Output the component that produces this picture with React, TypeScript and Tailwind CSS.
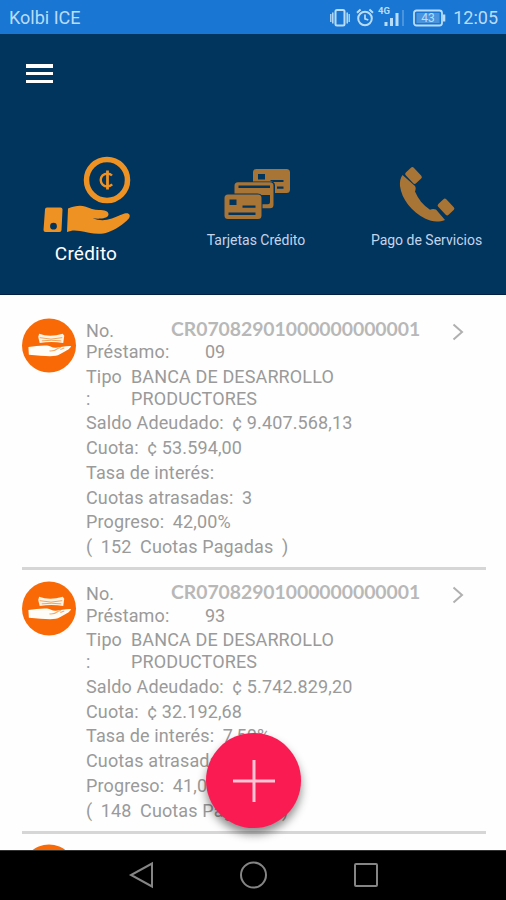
import type { ReactNode } from 'react';

type Loan = {
  suffix: string;
  balance: string;
  fee: string;
  rate: string;
  late: string;
  progress: string;
  paid: string;
};

const ACCOUNT = 'CR07082901000000000001';

const LOANS: Loan[] = [
  {
    suffix: '09',
    balance: '9.407.568,13',
    fee: '53.594,00',
    rate: '',
    late: '3',
    progress: '42,00%',
    paid: '152',
  },
  {
    suffix: '93',
    balance: '5.742.829,20',
    fee: '32.192,68',
    rate: '7,50%',
    late: '3',
    progress: '41,00%',
    paid: '148',
  },
];

function StatusBar() {
  return (
    <div className="flex h-[34px] shrink-0 items-center justify-between bg-[#1976d2] pr-[8px] pl-[9px] text-[#b9dcf8]">
      <span className="text-[18px]">Kolbi ICE</span>
      <div className="flex items-center pt-px">
        {/* Vibrate */}
        <svg width="20" height="20" viewBox="0 0 20 20" fill="none" stroke="currentColor" className="mr-[6px]">
          <rect x="5.5" y="2" width="9" height="15.5" rx="1.5" strokeWidth="2" />
          <path d="M2.8 4.5v11M17.2 4.5v11" strokeWidth="1.5" />
          <path d="M.8 6v8M19.2 6v8" strokeWidth="1.3" />
        </svg>
        {/* Alarm */}
        <svg width="18" height="20" viewBox="0 0 18 20" fill="none" stroke="currentColor" className="mr-[4px]">
          <circle cx="9" cy="10.5" r="6.8" strokeWidth="2" />
          <path d="M9 6.5v4.3l3.3 1.2" strokeWidth="1.7" />
          <path d="M1 4.7 4.6 1.5M17 4.7 13.4 1.5" strokeWidth="2" />
        </svg>
        {/* Signal */}
        <svg width="27" height="24" viewBox="0 0 27 24" fill="currentColor" className="mr-[8px]">
          <text x="0" y="8" fontSize="9.5" fontWeight="700">4G</text>
          <rect x="6.5" y="16" width="3" height="4" />
          <rect x="12" y="12" width="3" height="8" />
          <rect x="17.5" y="7" width="3" height="13" />
          <rect x="24" y="4" width="2" height="16" opacity=".3" />
        </svg>
        {/* Battery */}
        <svg width="33" height="18" viewBox="0 0 33 18" className="mr-[7px]">
          <rect x="1" y="1.5" width="28" height="15" rx="2.5" fill="none" stroke="currentColor" strokeWidth="1.8" />
          <rect x="30" y="5.5" width="2.3" height="7" fill="currentColor" />
          <rect x="3.5" y="4" width="23" height="10" fill="currentColor" opacity=".3" />
          <text x="15" y="13.3" fontSize="12" textAnchor="middle" fill="currentColor">43</text>
        </svg>
        <span className="text-[18px]">12:05</span>
      </div>
    </div>
  );
}

function CreditIcon() {
  return (
    <svg width="90" height="80" viewBox="0 0 90 80" fill="#ee9224" className="ml-[2px]">
      <circle cx="65" cy="24" r="20.5" fill="none" stroke="#ee9224" strokeWidth="5.5" />
      <path
        d="M70 19.5c-1.3-1.3-2.8-1.9-4.5-1.9-4 0-6.8 2.800-6.800 6.400s2.800 6.400 6.800 6.400c1.8 0 3.300-.7 4.700-2"
        fill="none"
        stroke="#ee9224"
        strokeWidth="2.4"
      />
      <path d="M65.500 14.500v19" fill="none" stroke="#ee9224" strokeWidth="2.800" />
      <path
        fillRule="evenodd"
        d="M5 51.5h13.5q2 0 2 2L19.5 74q0 2-2 2H3.5q-2 0-2-2L3 53.5q0-2 2-2Zm6.5 15.300a3.4 3.4 0 1 0 0 6.8 3.4 3.4 0 0 0 0-6.8Z"
      />
      <path d="M26 52.500C33 49.500 39 49 43 50.500c5 2 9 3.300 14 3.500 5.500 0 9.500 1 9.500 4.300 0 3-4 4-8 4.300-3 .2-5.500 0-8-.5 5 2.200 10 2.700 14.500 1.700 7-1.500 12-4.500 17.500-6.300 4.500-1.300 6.500 1.500 4.500 4.700C81 69 74 73 66 76.200 57 79.500 46 76.500 38 75c-5-1-9-.8-13 1Z" />
    </svg>
  );
}

function CardsIcon() {
  return (
    <svg width="70" height="54" viewBox="0 0 70 54" fill="#a87536" className="ml-[4px]">
      <path
        fillRule="evenodd"
        d="M33.500 1h30q3.500 0 3.500 3.500V21.500q0 3.500-3.500 3.500H52V17.500q0-4-4.500-4H30V4.500Q30 1 33.500 1Zm1.500 5v5.500h7v-5.500Zm12.500 6v2h13v-2Zm6.500 6.500v2.200h6.500v-2.200Z"
      />
      <path
        fillRule="evenodd"
        d="M15 14.200h32q3.500 0 3.500 3.500v19q0 3.500-3.500 3.500h-7.500v-4h5.500q2 0 2-2V27h-8.500q-.8-1.500-4-1.500H11.500V17.700q0-3.500 3.500-3.500Zm.5 3.400v2.400h31.500v-2.400Z"
      />
      <path
        fillRule="evenodd"
        d="M5 26.500h30q3.500 0 3.500 3.500v17.500q0 3.500-3.500 3.500H5q-3.500 0-3.500-3.500V30q0-3.500 3.500-3.500Zm1.500 5v5.500h7v-5.500Zm13 6v2.200h13v-2.200Zm-14 7v2.400h27v-2.400Z"
      />
    </svg>
  );
}

function PhoneIcon() {
  return (
    <svg width="58" height="58" viewBox="0 0 58 58" fill="#a87536">
      <path d="M4.500 9Q1.500 13 2 20C3.500 33 14 46 27 52.500c7 3.300 13 4 20 1.500L38 43.500c-2.500-1-4.500-.5-6 .2C25 39 20 33 17 25.500c.8-2 1-4 0-5.500Z" />
      <rect x="-5.500" y="-7.500" width="11" height="15" rx="2" transform="translate(15.500 9.500) rotate(-43)" />
      <rect x="-5.500" y="-7.500" width="11" height="15" rx="2" transform="translate(48 41) rotate(-43)" />
    </svg>
  );
}

function Header() {
  return (
    <header className="flex h-[261px] shrink-0 flex-col border-b border-[#001f45] bg-[#02355e] text-[#e6f0fa]">
      <div className="mt-[30px] ml-[26px] flex h-[19px] w-[27px] flex-col justify-between">
        <div className="h-[3.5px] bg-white" />
        <div className="h-[3.5px] bg-white" />
        <div className="h-[3.5px] bg-white" />
      </div>
      <div className="mt-[73px] grid grid-cols-[172px_168px_166px]">
        <div className="flex flex-col items-center">
          <CreditIcon />
          <span className="mt-[4px] text-[19px] leading-[28px] tracking-[0.2px] text-white">Crédito</span>
        </div>
        <div className="flex flex-col items-center pt-[12px]">
          <CardsIcon />
          <span className="mt-[8px] text-[14px] leading-5 text-[#c4d4ea]">Tarjetas Crédito</span>
        </div>
        <div className="flex flex-col items-center pt-[10px] pl-[7px]">
          <PhoneIcon />
          <span className="mt-[6px] text-[14px] leading-5 whitespace-nowrap text-[#c4d4ea]">Pago de Servicios</span>
        </div>
      </div>
    </header>
  );
}

function LoanIcon() {
  return (
    <svg width="55" height="55" viewBox="0 0 56 56" className="mr-px shrink-0">
      <circle cx="27.5" cy="28" r="27.500" fill="#f96a07" />
      <path d="M17.500 16q10.500 4 24 0l1.500 2-1 7.500q-12-2-24 0l-1.500-6.500Z" fill="#fff3e4" />
      <path d="M18 20q11.500 3 23 0M20 23.300q9.500-1.300 20 0" fill="none" stroke="#eda45e" strokeWidth="1" />
      <path
        d="M6.500 29.500c7-.7 13-2 19-1.500 3.500.5 5 2.500 9 2.300 5-.5 9-2 15.500-1.800-1 3.500-6.500 5.500-11.500 8.500C33 40.500 22 38.500 7 37.500Z"
        fill="#fffdf8"
      />
      <path d="M28 33.500q5 .5 8.500-2.500l3-1.200M39 32l4-1.500" fill="none" stroke="#f5ac68" strokeWidth="1.200" />
    </svg>
  );
}

function Row({ label, children }: { label: string; children?: ReactNode }) {
  return (
    <div className="flex gap-[8.5px] whitespace-nowrap">
      <span>{label}</span>
      <span>{children}</span>
    </div>
  );
}

function LoanItem({ loan }: { loan: Loan }) {
  return (
    <li className="mr-[20.5px] ml-[22px] flex h-[263.5px] shrink-0 border-b-[3px] border-[#d6d6d6] pt-[11px]">
      <LoanIcon />
      <div className="ml-[8px] flex flex-col gap-[3.2px] pt-[2px] text-[18px] leading-[21.6px] tracking-[0.13px] text-[#9a9a9a]">
        <div className="flex">
          <span className="w-[85px]">
            No.
            <br />
            Préstamo:
          </span>
          <div className="flex flex-col">
            <span className="-mt-[2px] mb-[2px] font-[Lato,sans-serif] text-[19.4px] font-bold tracking-[-0.05px] text-[#b8b8b8]">
              {ACCOUNT}
            </span>
            <span className="pl-[34px] tracking-normal">{loan.suffix}</span>
          </div>
        </div>
        <div className="flex">
          <span className="w-[45px]">
            Tipo
            <br />:
          </span>
          <span>
            BANCA DE DESARROLLO
            <br />
            PRODUCTORES
          </span>
        </div>
        <Row label="Saldo Adeudado:">¢ {loan.balance}</Row>
        <Row label="Cuota:">¢ {loan.fee}</Row>
        <Row label="Tasa de interés:">{loan.rate}</Row>
        <Row label="Cuotas atrasadas:">{loan.late}</Row>
        <Row label="Progreso:">{loan.progress}</Row>
        <div className="flex gap-[8.5px] whitespace-nowrap">
          <span>(</span>
          <span>{loan.paid}</span>
          <span>Cuotas Pagadas</span>
          <span>)</span>
        </div>
      </div>
      <svg
        width="12"
        height="18"
        viewBox="0 0 12 18"
        fill="none"
        stroke="#b0b0b0"
        strokeWidth="2"
        className="mt-[5px] mr-[22px] ml-auto shrink-0"
      >
        <path d="m1.500 1.500 8.500 7.500-8.500 7.500" />
      </svg>
    </li>
  );
}

function NavBar() {
  return (
    <nav className="flex h-[50px] shrink-0 items-center border-t border-[#333] bg-black pb-px pl-[128px]">
      <svg width="252" height="30" viewBox="0 0 252 30" fill="none" stroke="#858585" strokeWidth="2">
        <path d="M24 3.500v23L3 15Z" />
        <circle cx="125.500" cy="15" r="12.500" />
        <rect x="227" y="4" width="22" height="22" rx="1" />
      </svg>
    </nav>
  );
}

export default function App() {
  return (
    <div className="relative flex h-[900px] w-[506px] flex-col overflow-hidden bg-[#fefefe] font-[Roboto,sans-serif]">
      <StatusBar />
      <Header />
      <ul className="flex min-h-0 flex-1 flex-col overflow-hidden pt-[11.6px]">
        {LOANS.map((loan) => (
          <LoanItem key={loan.suffix} loan={loan} />
        ))}
        {/* Next loan, cut off by the navigation bar */}
        <li className="mx-[22px] pt-[10px]">
          <LoanIcon />
        </li>
      </ul>
      <NavBar />
      <button
        aria-label="Agregar"
        className="absolute top-[733px] left-[206px] flex size-[95px] items-center justify-center rounded-full bg-[#fb1b53] shadow-[0_6px_10px_rgba(0,0,0,0.45)]"
      >
        <svg width="44" height="44" viewBox="0 0 44 44" stroke="#ffc4d3" strokeWidth="3" className="ml-px">
          <path d="M22 1v42M1 22h42" />
        </svg>
      </button>
    </div>
  );
}
